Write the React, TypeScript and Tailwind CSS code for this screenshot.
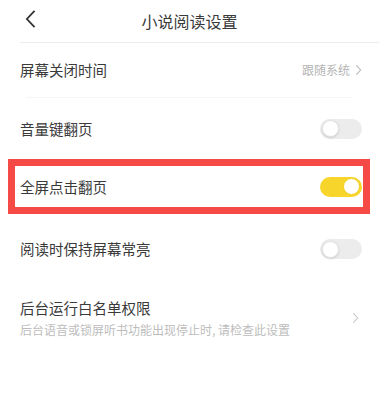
import React, {useState} from 'react';

const font = {fontFamily: '"Noto Sans CJK SC", "Noto Sans", sans-serif'};

const Toggle: React.FC<{on: boolean; onChange: () => void}> = ({on, onChange}) => (
    <button
        onClick={onChange}
        className={`relative w-[42px] h-[20px] rounded-full flex items-center px-[2px] ${on ? 'bg-[#f8d52a] justify-end' : 'bg-[#ececec] justify-start'}`}
    >
        <span
            className={`block w-[17px] h-[17px] rounded-full bg-white ${on ? 'border border-[#f3cf1f]' : 'border border-[#e2e2e2] shadow-sm'}`}
        />
    </button>
);

const Chevron: React.FC<{className?: string}> = ({className}) => (
    <svg viewBox="0 0 8 14" className={className} fill="none" stroke="currentColor" strokeWidth="1.2">
        <path d="M1.5 1.5 L6.5 7 L1.5 12.5"/>
    </svg>
);

export default function App() {
    const [volume, setVolume] = useState(false);
    const [tap, setTap] = useState(true);
    const [awake, setAwake] = useState(false);

    return (
        <div className="w-[379px] h-[419px] bg-white text-[#3a3a3a]" style={font}>
            <div className="relative h-[43px] flex items-center justify-center border-b border-[#ececec] ml-[20px]">
                <svg viewBox="0 0 12 20" className="absolute left-[5px] top-[10px] w-[11px] h-[18px]" fill="none"
                     stroke="#333" strokeWidth="2">
                    <path d="M10.5 1 L2 10 L10.5 19"/>
                </svg>
                <span className="text-[16px] -ml-[20px]">小说阅读设置</span>
            </div>

            <div className="h-[54px] flex items-center justify-between pl-[20px] pr-[17px]">
                <span className="text-[14.5px]">屏幕关闭时间</span>
                <span className="flex items-center gap-[5px] text-[12px] text-[#b5b5b5]">
                    跟随系统
                    <Chevron className="w-[7px] h-[12px]"/>
                </span>
            </div>
            <div className="mx-[26px] h-px bg-[#f6f6f6]"/>

            <div className="h-[61px] flex items-center justify-between pl-[20px] pr-[17px]">
                <span className="text-[14.5px]">音量键翻页</span>
                <Toggle on={volume} onChange={() => setVolume(!volume)}/>
            </div>

            <div className="mx-[8px] w-[362px] h-[55px] border-[7px] border-[#f54a45] flex items-center justify-between pl-[5px] pr-[1px]">
                <span className="text-[14.5px]">全屏点击翻页</span>
                <Toggle on={tap} onChange={() => setTap(!tap)}/>
            </div>

            <div className="h-[70px] flex items-center justify-between pl-[20px] pr-[17px]">
                <span className="text-[14.5px]">阅读时保持屏幕常亮</span>
                <Toggle on={awake} onChange={() => setAwake(!awake)}/>
            </div>

            <div className="h-[68px] flex items-center justify-between pl-[20px] pr-[17px]">
                <div className="flex flex-col gap-[4px]">
                    <span className="text-[14.5px] leading-[20px]">后台运行白名单权限</span>
                    <span className="text-[12px] leading-[16px] text-[#bdbdbd]">后台语音或锁屏听书功能出现停止时, 请检查此设置</span>
                </div>
                <Chevron className="w-[7px] h-[12px] text-[#c4c4c4] mr-[3px]"/>
            </div>
        </div>
    );
}
